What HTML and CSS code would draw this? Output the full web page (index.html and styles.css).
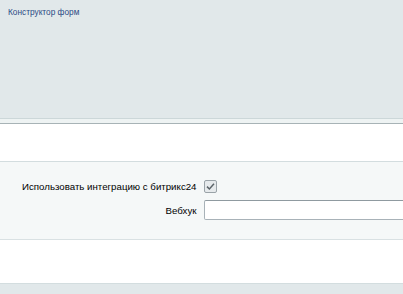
FILE: index.html
```html
<!DOCTYPE html>
<html lang="ru">
<head>
  <meta charset="UTF-8">
  <title>Конструктор форм</title>
  <link rel="stylesheet" href="styles.css">
</head>
<body>
  <div class="shapka">
    <a class="kroshki" href="#">Конструктор форм</a>
  </div>
  <div class="razdel"></div>

  <div class="kontent">
    <div class="pusto"></div>
    <div class="forma">
      <div class="radek">
        <label class="nazev" for="b24">Использовать интеграцию с битрикс24</label>
        <div class="pole">
          <label class="zaskrt" for="b24">
            <input type="checkbox" id="b24" checked>
            <svg width="13" height="13" viewBox="0 0 13 13">
              <rect x="0.5" y="0.5" width="12" height="12" rx="1.5" fill="#e6eaec" stroke="#9aa3a8"/>
              <path d="M3 6.6 L5.4 9 L10 3.8" fill="none" stroke="#5b6469" stroke-width="1.5"/>
            </svg>
          </label>
        </div>
      </div>
      <div class="radek">
        <label class="nazev" for="hook">Вебхук</label>
        <div class="pole"><input type="text" id="hook" class="vstup"></div>
      </div>
    </div>
    <div class="pusto spodni"></div>
  </div>

  <div class="pata"></div>
</body>
</html>
```

FILE: styles.css
```css
html, body {
  margin: 0;
  padding: 0;
  height: 100%;
}
body {
  background-color: #e1e8ea;
  font-family: Arial, "Liberation Sans", sans-serif;
  font-size: 10px;
  color: #000;
  overflow: hidden;
}
.shapka {
  height: 111px;
  padding: 7px 0 0 8px;
  border-bottom: 1px solid #ccd7d9;
}
.kroshki {
  display: block;
  color: #2c4b85;
  text-decoration: none;
  font-size: 8.3px;
  line-height: 10px;
}
.razdel {
  height: 4px;
  background-color: #eef3f3;
  border-bottom: 1px solid #a7b3b6;
}
.kontent {
  background-color: #fff;
  border-bottom: 1px solid #d3dddf;
}
.pusto {
  height: 37px;
  border-bottom: 1px solid #d3dddf;
}
.spodni {
  height: 43px;
  border-bottom: none;
}
.forma {
  background-color: #f5f8f8;
  border-bottom: 1px solid #d9e1e3;
  padding: 18px 0 19px;
  display: flex;
  flex-direction: column;
  gap: 7px;
}
.radek {
  display: grid;
  grid-template-columns: minmax(0, 1fr) minmax(0, 1fr);
  align-items: center;
}
.nazev {
  text-align: right;
  padding-right: 5px;
  white-space: nowrap;
  font-size: 9.7px;
}
.pole {
  padding-left: 2px;
  display: flex;
  align-items: center;
  overflow: hidden;
}
.zaskrt {
  display: flex;
  width: 13px;
  height: 13px;
}
.zaskrt input {
  display: none;
}
.vstup {
  box-sizing: border-box;
  flex: none;
  width: 240px;
  height: 20px;
  margin: 0;
  border: 1px solid #a8b2b8;
  border-top-color: #8f9aa0;
  border-radius: 2px;
  background: #fff;
}
.pata {
  height: 20px;
}
```
